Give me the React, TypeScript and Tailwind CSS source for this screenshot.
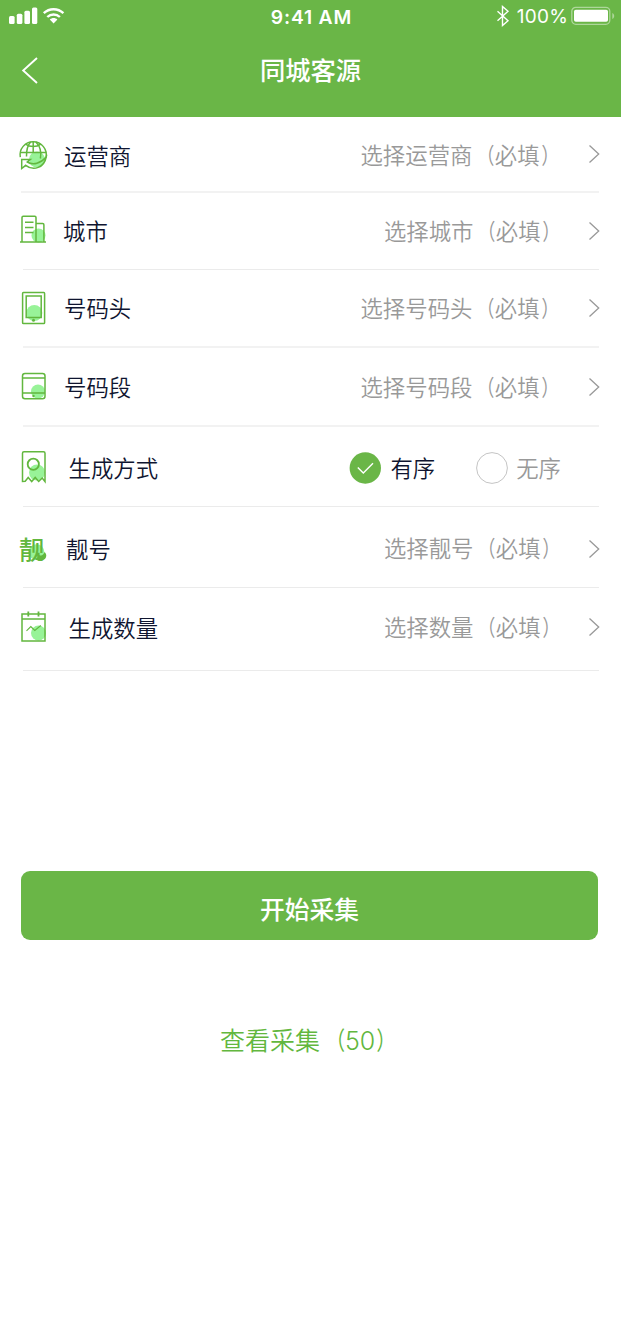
import React, { useState } from 'react'
import clsx from 'clsx'

// ==========================================
// TYPES
// ==========================================
interface FieldRow {
  id: string
  label: string
  placeholder?: string
  icon: React.ReactNode
  rowClass: string
  labelClass: string
  valueClass?: string
  chevronClass?: string
  dividerClass: string
}

// ==========================================
// ICONS
// ==========================================
const FieldIcon: React.FC<{ className?: string; children: React.ReactNode }> = ({ className, children }) => (
  <svg
    className={clsx('h-9 w-8 shrink-0', className)}
    viewBox="0 0 32 36"
    fill="none"
    stroke="#62b73e"
    strokeWidth="1.5"
  >
    {children}
  </svg>
)

const GlobeIcon = () => (
  <FieldIcon>
    <circle cx="19" cy="23.5" r="8" fill="#98f398" stroke="none" />
    <path d="M2.300 21.200A13.100 13.100 0 1 1 28 21.500" />
    <path d="M2 16.500h26.300M15.200 5.800v10.700M7.500 8.200c4.600 3.200 10.800 3.200 15.400 0" />
    <path d="M12.600 6C9.300 9.500 8.400 13 8.500 20.500M17.800 6c4.300 4 5.800 9.500 4.600 16.500" />
    <path d="M3.700 32.500V23.500h8.600l-3 2.500c6 3.800 13.300 1.400 18.900-5-2 10.500-12.500 14.500-20.500 8.300z" />
  </FieldIcon>
)

const CityIcon = () => (
  <FieldIcon className="-mt-[2px]">
    <circle cx="20.500" cy="23.500" r="7" fill="#98f398" stroke="none" />
    <path d="M2 29.900h26M4 30V5.500q0-1.200 1.200-1.200h11.600q1.200 0 1.200 1.200v24M18 11.600h6.700q1.200 0 1.200 1.200V30M7 10.200h8.500M7 15.500h8.500M7 20.600h8.500" />
  </FieldIcon>
)

const PhoneIcon = () => (
  <FieldIcon>
    <circle cx="16.300" cy="23" r="8" fill="#98f398" stroke="none" />
    <rect x="4.600" y="2.600" width="22" height="31" rx=".8" />
    <rect x="8.200" y="6" width="15" height="21.500" />
    <circle cx="15.500" cy="30.300" r="1.500" fill="#62b73e" stroke="none" />
  </FieldIcon>
)

const TabletIcon = () => (
  <FieldIcon className="-mt-px">
    <circle cx="20" cy="23.500" r="7" fill="#98f398" stroke="none" />
    <rect x="4.500" y="5.500" width="22.500" height="25.200" rx="2.500" />
    <path d="M4.500 10h22.500M4.500 25h22.500" />
    <circle cx="15.500" cy="28" r="1.200" fill="#62b73e" stroke="none" />
  </FieldIcon>
)

const TicketIcon = () => (
  <FieldIcon className="-mt-[2px]">
    <circle cx="19" cy="23.500" r="8" fill="#98f398" stroke="none" />
    <path d="M4.500 32.500V4.300q0-1.500 1.500-1.500h19.500q1.500 0 1.500 1.500v28.200l-2.800-3.500-3.500 3.500-3.500-4-3.500 4-3.500-4-3 3.700z" />
    <circle cx="15.300" cy="15.200" r="5.600" strokeWidth="1.800" />
  </FieldIcon>
)

const PrettyIcon = () => (
  <div className="relative h-9 w-8 shrink-0">
    <svg className="absolute inset-0" viewBox="0 0 32 36">
      <circle cx="18.500" cy="21" r="7.800" fill="#98f398" />
      <path d="M16 27.500c3 .5 4-1.500 5.500-3.500 2 1.500 4 0 5-3 3 2.500 2 7-1.500 8-4 1-7 .5-9-1.500z" fill="#62b73e" />
    </svg>
    <span className="absolute left-px top-[3px] text-[25.500px] leading-7 font-medium text-[#62b73e]">靓</span>
  </div>
)

const CalendarIcon = () => (
  <FieldIcon className="-mt-[2px]">
    <circle cx="20.500" cy="24" r="7.500" fill="#98f398" stroke="none" />
    <path d="M4 5h23v27H4zM4 10h23" />
    <path d="M10.300 2.500v5M20.500 2.500v5" strokeWidth="1.800" />
    <path d="M8.500 21.800l4.300-4.300 4 4 6-5" strokeWidth="1.100" />
  </FieldIcon>
)

const ChevronRight: React.FC<{ className?: string }> = ({ className }) => (
  <svg className={clsx('h-5 w-3 shrink-0', className)} viewBox="0 0 12 20" fill="none" stroke="#999" strokeWidth="1.300">
    <path d="M1.500 1.500L10.700 10l-9.200 8.500" />
  </svg>
)

const Radio: React.FC<{ checked: boolean }> = ({ checked }) => (
  <svg className="size-8" viewBox="0 0 32 32" fill="none">
    {checked ? (
      <>
        <circle cx="16.300" cy="16" r="15.700" fill="#6ab647" />
        <path d="M8.800 15.500l5.500 5.500L24 11.300" stroke="#fff" strokeWidth="1.400" />
      </>
    ) : (
      <circle cx="16" cy="16" r="15.400" stroke="#c4c4c4" strokeWidth="1" />
    )}
  </svg>
)

// Full-width brackets, squeezed towards the text they enclose
const Bracketed: React.FC<{ children: React.ReactNode }> = ({ children }) => (
  <>
    <span className="inline-block origin-right scale-x-75 font-normal">（</span>
    {children}
    <span className="inline-block origin-left translate-x-[1.500px] scale-x-75 font-normal">）</span>
  </>
)

// ==========================================
// FORM ROWS
// ==========================================
const rows: FieldRow[] = [
  {
    id: 'carrier',
    label: '运营商',
    placeholder: '选择运营商',
    icon: <GlobeIcon />,
    rowClass: 'h-[74px]',
    labelClass: 'ml-[14px] mt-[2px]',
    valueClass: 'mr-[26px]',
    chevronClass: '-mt-px',
    dividerClass: 'ml-[21px] h-[2px] bg-[#f2f2f2]',
  },
  {
    id: 'city',
    label: '城市',
    placeholder: '选择城市',
    icon: <CityIcon />,
    rowClass: 'h-[76px]',
    labelClass: 'ml-[13px] -mt-[2px]',
    valueClass: 'mr-[25px] -mt-[2px]',
    dividerClass: 'ml-[23px] h-px bg-[#ebebeb]',
  },
  {
    id: 'prefix',
    label: '号码头',
    placeholder: '选择号码头',
    icon: <PhoneIcon />,
    rowClass: 'h-[76px]',
    labelClass: 'ml-[14px] -mt-[2px]',
    valueClass: 'mr-[26px] -mt-[2px]',
    dividerClass: 'ml-[23px] h-[2px] bg-[#f2f2f2]',
  },
  {
    id: 'segment',
    label: '号码段',
    placeholder: '选择号码段',
    icon: <TabletIcon />,
    rowClass: 'h-[77px]',
    labelClass: 'ml-[14px] -mt-[2px]',
    valueClass: 'mr-[26px] -mt-[2px]',
    dividerClass: 'ml-[23px] h-[2px] bg-[#f2f2f2]',
  },
  {
    id: 'order',
    label: '生成方式',
    icon: <TicketIcon />,
    rowClass: 'h-[79px] pt-[2px]',
    labelClass: 'ml-[18.500px] -mt-px',
    dividerClass: 'ml-[23px] h-px bg-[#ebebeb]',
  },
  {
    id: 'pretty',
    label: '靓号',
    placeholder: '选择靓号',
    icon: <PrettyIcon />,
    rowClass: 'h-[80px] pt-[3px]',
    labelClass: 'ml-[16px] -mt-px',
    valueClass: 'mr-[25px] -mt-[3px]',
    dividerClass: 'ml-[23px] h-px bg-[#ebebeb]',
  },
  {
    id: 'amount',
    label: '生成数量',
    placeholder: '选择数量',
    icon: <CalendarIcon />,
    rowClass: 'h-[82px] pb-[3px]',
    labelClass: 'ml-[18.500px] -mt-[2px]',
    valueClass: 'mr-[25px] -mt-[4px]',
    chevronClass: '-mt-px',
    dividerClass: 'ml-[23px] h-px bg-[#ebebeb]',
  },
]

const StatusBar = () => (
  <div className="flex h-8 items-center justify-between pl-[9px] pr-[5px] text-white">
    <svg className="h-5 w-[60px]" viewBox="0 0 60 20" fill="#fff">
      <rect x="0" y="10" width="5.600" height="8" rx="1.500" />
      <rect x="7.800" y="7.700" width="5.600" height="10.300" rx="1.500" />
      <rect x="15.400" y="4.800" width="5.600" height="13.200" rx="1.500" />
      <rect x="23" y="1.500" width="5.300" height="16.500" rx="1.500" />
      <g fill="none" stroke="#fff" strokeWidth="2.400">
        <path d="M34.800 7.200c5.500-5.200 14-5.200 19.600 0" />
        <path d="M38.300 11c3.600-3.400 9-3.400 12.600 0" />
      </g>
      <path d="M40.800 13.600c2.200-2 5.500-2 7.600 0l-3.800 3.800z" />
    </svg>
    <span className="ml-[58px] mt-[2px] font-['Inter'] text-[19.300px] font-semibold tracking-[0.8px]">9:41 AM</span>
    <div className="flex items-center">
      <svg className="h-[22px] w-[14px]" viewBox="0 0 14 22" fill="none" stroke="#fff" strokeWidth="1.400">
        <path d="M1.500 6.200l10.500 9.500-5.500 4.800V1.500L12 6.300 1.500 15.800" />
      </svg>
      <span className="ml-[7px] mt-[2px] font-['Inter'] text-[19px] tracking-[0.200px]">100%</span>
      <svg className="ml-[3px] h-[20px] w-[45px]" viewBox="0 0 45 20">
        <rect x=".8" y="1.300" width="38" height="17" rx="4" fill="none" stroke="#fff" strokeOpacity=".45" strokeWidth="1.300" />
        <rect x="3" y="3.800" width="34" height="12" rx="1.800" fill="#fff" />
        <path d="M41.300 7v6c2.500-1 2.500-5 0-6z" fill="#fff" fillOpacity=".45" />
      </svg>
    </div>
  </div>
)

// ==========================================
// PAGE
// ==========================================
const App: React.FC = () => {
  const [ordered, setOrdered] = useState(true)

  return (
    <div className="min-h-[1344px] w-[621px] bg-white font-['Noto_Sans_CJK_SC',sans-serif]">
      <header className="h-[117px] bg-[#6ab647]">
        <StatusBar />
        <div className="grid h-[77px] grid-cols-[60px_1fr_60px] items-center">
          <button className="pl-[21px]">
            <svg className="h-7 w-5" viewBox="0 0 20 28" fill="none" stroke="#fff" strokeWidth="1.900">
              <path d="M16 1L2.200 13.500 16 26" />
            </svg>
          </button>
          <h1 className="-mt-px text-center text-[25.300px] font-medium text-white">同城客源</h1>
        </div>
      </header>

      <main>
        {rows.map((row) => (
          <section key={row.id}>
            <div className={clsx('flex items-center pl-[18px] pr-[21px] text-[22.400px] leading-8 font-[350]', row.rowClass)}>
              {row.icon}
              <span className={clsx('text-[#0f1530]', row.labelClass)}>{row.label}</span>
              {row.placeholder ? (
                <button className="ml-auto flex items-center text-[#999]">
                  <span className={row.valueClass}>
                    {row.placeholder}
                    <Bracketed>必填</Bracketed>
                  </span>
                  <ChevronRight className={row.chevronClass} />
                </button>
              ) : (
                <div className="ml-auto mr-[39px] flex items-center">
                  <button className="flex items-center" onClick={() => setOrdered(true)}>
                    <Radio checked={ordered} />
                    <span className={clsx('-mt-[2px] ml-[9px]', ordered ? 'text-[#0f1530]' : 'text-[#999]')}>有序</span>
                  </button>
                  <button className="ml-[41px] flex items-center" onClick={() => setOrdered(false)}>
                    <Radio checked={!ordered} />
                    <span className={clsx('-mt-[2px] ml-[8px]', ordered ? 'text-[#999]' : 'text-[#0f1530]')}>无序</span>
                  </button>
                </div>
              )}
            </div>
            <hr className={clsx('mr-[22px] border-0', row.dividerClass)} />
          </section>
        ))}

        <button className="ml-[21px] mt-[200px] block h-[69px] w-[577px] rounded-[9px] bg-[#6ab647] pt-[7px] text-center text-[24.800px] font-medium text-white">
          开始采集
        </button>
        <button className="ml-[220px] mt-[81px] block text-[25px] leading-9 font-[350] text-[#62b73e]">
          查看采集
          <Bracketed>
            <span className="font-['Inter'] font-light">50</span>
          </Bracketed>
        </button>
      </main>
    </div>
  )
}

export default App
